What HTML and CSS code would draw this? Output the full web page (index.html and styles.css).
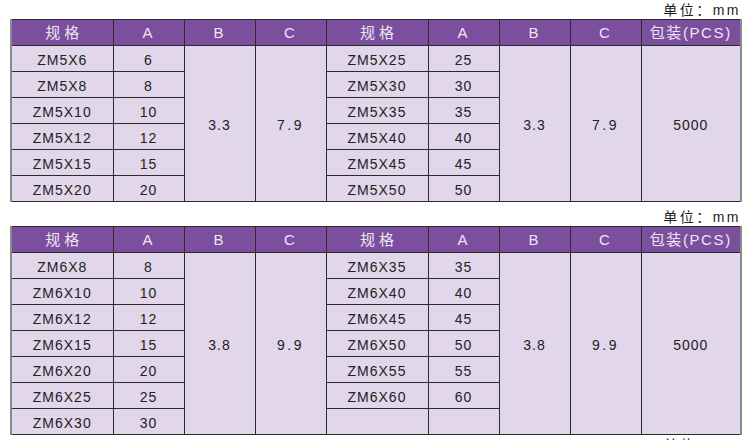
FILE: index.html
```html
<!DOCTYPE html>
<html lang="zh-CN">
<head>
<meta charset="utf-8">
<title>ZM 规格表</title>
<link rel="stylesheet" href="styles.css">
</head>
<body>
<div class="page">
  <div class="unit first">单位：mm</div>
  <table class="spec">
    <colgroup>
      <col class="c-wide"><col class="c-num"><col class="c-num"><col class="c-num">
      <col class="c-wide"><col class="c-num"><col class="c-num"><col class="c-num">
      <col class="c-pack">
    </colgroup>
    <thead>
      <tr>
        <th class="cjk">规格</th><th>A</th><th>B</th><th>C</th>
        <th class="cjk">规格</th><th>A</th><th>B</th><th>C</th>
        <th class="pack">包装(PCS)</th>
      </tr>
    </thead>
    <tbody>
      <tr><td>ZM5X6</td><td>6</td><td rowspan="6">3.3</td><td rowspan="6" class="wide">7.9</td><td>ZM5X25</td><td>25</td><td rowspan="6">3.3</td><td rowspan="6" class="wide">7.9</td><td rowspan="6">5000</td></tr>
      <tr><td>ZM5X8</td><td>8</td><td>ZM5X30</td><td>30</td></tr>
      <tr><td>ZM5X10</td><td>10</td><td>ZM5X35</td><td>35</td></tr>
      <tr><td>ZM5X12</td><td>12</td><td>ZM5X40</td><td>40</td></tr>
      <tr><td>ZM5X15</td><td>15</td><td>ZM5X45</td><td>45</td></tr>
      <tr><td>ZM5X20</td><td>20</td><td>ZM5X50</td><td>50</td></tr>
    </tbody>
  </table>

  <div class="unit">单位：mm</div>
  <table class="spec">
    <colgroup>
      <col class="c-wide"><col class="c-num"><col class="c-num"><col class="c-num">
      <col class="c-wide"><col class="c-num"><col class="c-num"><col class="c-num">
      <col class="c-pack">
    </colgroup>
    <thead>
      <tr>
        <th class="cjk">规格</th><th>A</th><th>B</th><th>C</th>
        <th class="cjk">规格</th><th>A</th><th>B</th><th>C</th>
        <th class="pack">包装(PCS)</th>
      </tr>
    </thead>
    <tbody>
      <tr><td>ZM6X8</td><td>8</td><td rowspan="7">3.8</td><td rowspan="7" class="wide">9.9</td><td>ZM6X35</td><td>35</td><td rowspan="7">3.8</td><td rowspan="7" class="wide">9.9</td><td rowspan="7">5000</td></tr>
      <tr><td>ZM6X10</td><td>10</td><td>ZM6X40</td><td>40</td></tr>
      <tr><td>ZM6X12</td><td>12</td><td>ZM6X45</td><td>45</td></tr>
      <tr><td>ZM6X15</td><td>15</td><td>ZM6X50</td><td>50</td></tr>
      <tr><td>ZM6X20</td><td>20</td><td>ZM6X55</td><td>55</td></tr>
      <tr><td>ZM6X25</td><td>25</td><td>ZM6X60</td><td>60</td></tr>
      <tr><td>ZM6X30</td><td>30</td><td></td><td></td></tr>
    </tbody>
  </table>

  <div class="unit last">单位：mm</div>
</div>
</body>
</html>
```

FILE: styles.css
```css
html, body {
  margin: 0;
  padding: 0;
  background: #ffffff;
}

body {
  font-family: "Liberation Sans", Arial, "Noto Sans CJK SC", sans-serif;
  color: #222222;
  overflow: hidden;
}

.page {
  width: 732px;
  margin-left: 10px;
}

.unit {
  height: 24px;
  box-sizing: border-box;
  padding-top: 8px;
  padding-right: 1px;
  font-size: 14px;
  line-height: 14px;
  letter-spacing: 2.5px;
  text-align: right;
  color: #1e1e1e;
}

.unit.first {
  margin-top: -5px;
}

.unit.last {
  padding-top: 3px;
}

.spec {
  width: 732px;
  table-layout: fixed;
  border-collapse: collapse;
  border-top: 1px solid #9a9a9a;
  border-left: 2px solid #8a8a8a;
  border-right: 2px solid #8a8a8a;
  border-bottom: 1px solid #6a6a6a;
}

.c-wide { width: 102px; }
.c-num { width: 71px; }
.c-pack { width: 100px; }

.spec th,
.spec td {
  border: 1px solid #2b2b2b;
  padding: 0;
  text-align: center;
  vertical-align: middle;
  line-height: 16px;
}

.spec th {
  background: #7b4f9e;
  color: #ece6f2;
  font-weight: normal;
  font-size: 15px;
  letter-spacing: 2px;
  height: 24px;
  padding-top: 1px;
}

.spec th.cjk {
  letter-spacing: 4px;
  text-indent: 4px;
}

.spec th.pack {
  letter-spacing: 1.6px;
}

.spec td {
  background: #e1d6ea;
  font-size: 14px;
  letter-spacing: 1px;
  height: 23px;
  padding-top: 2px;
}

.spec td.wide {
  letter-spacing: 2.5px;
}
```
